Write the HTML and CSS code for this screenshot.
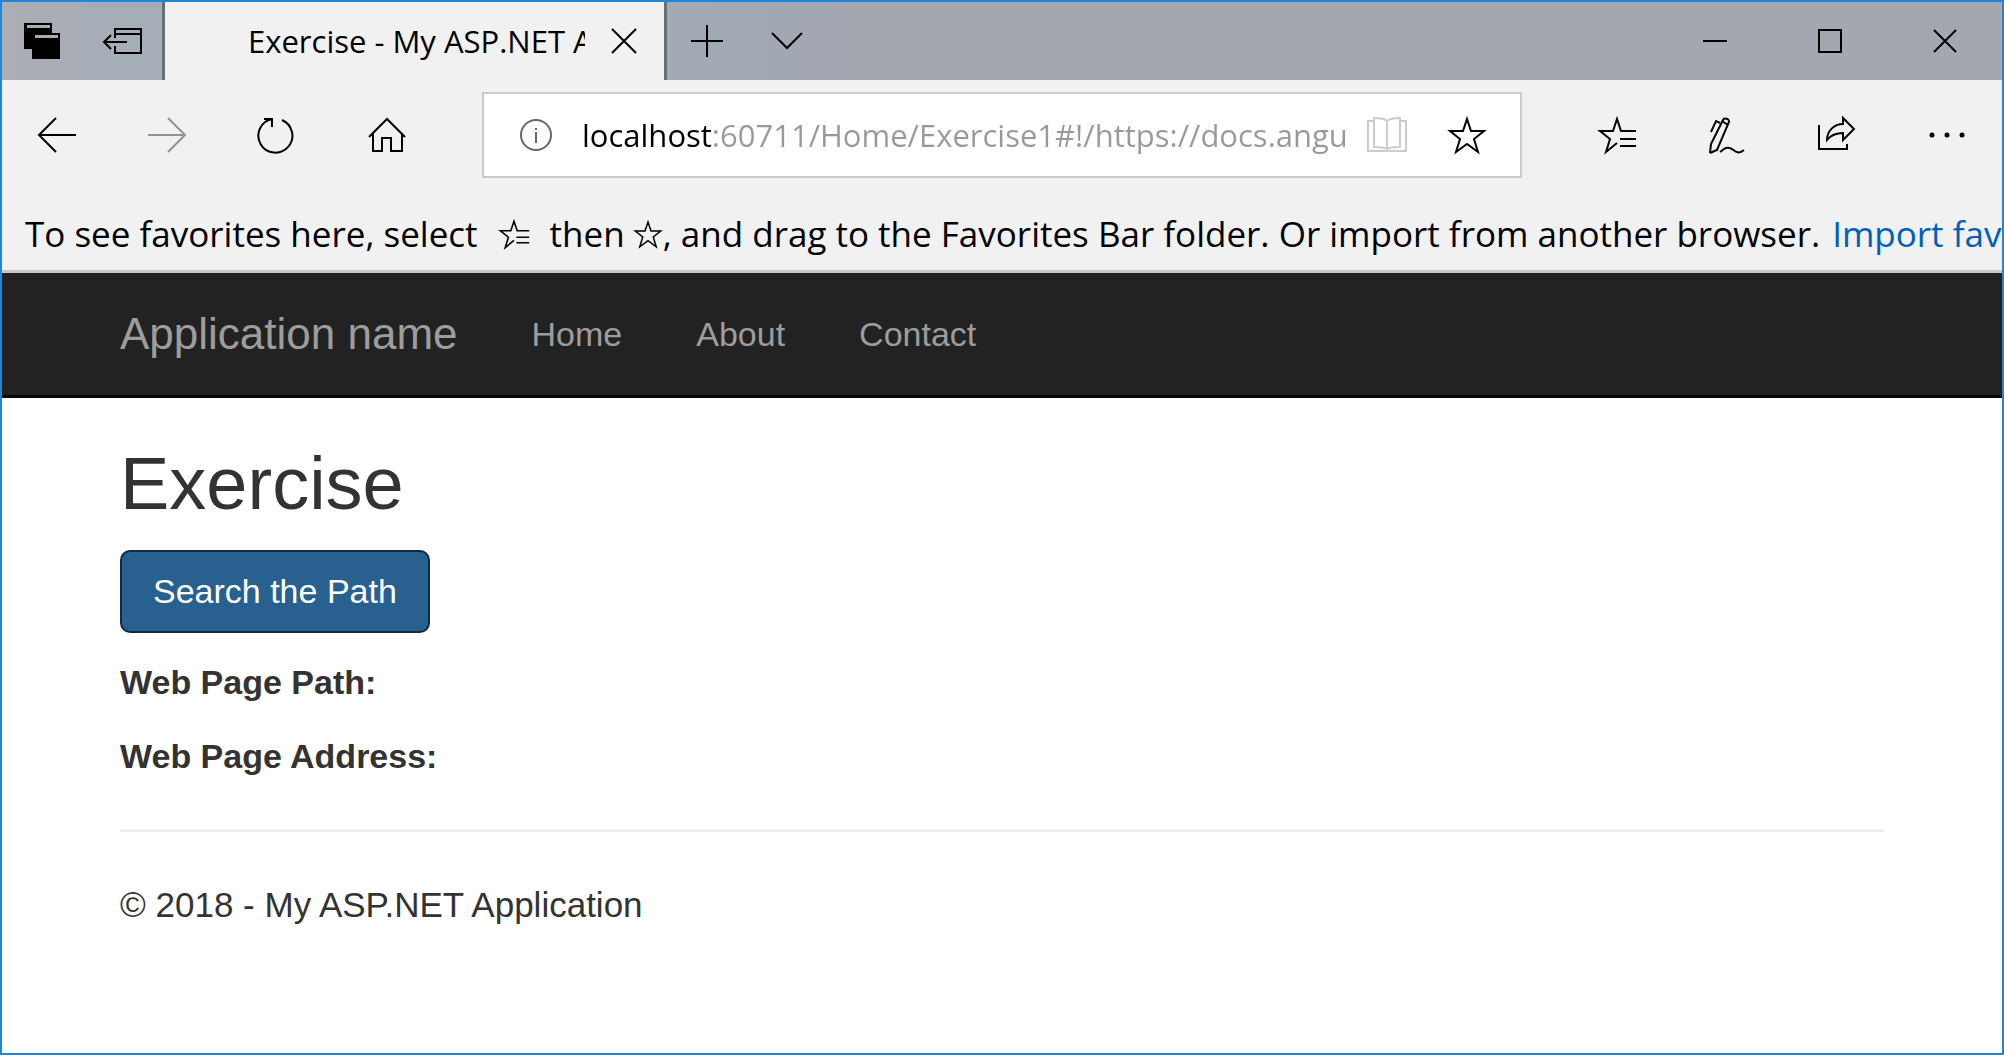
FILE: index.html
```
<!DOCTYPE html>
<html lang="en">
<head>
  <meta charset="UTF-8">
  <meta name="viewport" content="width=device-width, initial-scale=1.0">
  <title>Exercise - My ASP.NET Application</title>
  <link rel="stylesheet" href="styles.css">
</head>
<body>
  <div class="window">
    <div class="tabstrip">
      <button class="strip-btn" aria-label="Tabs you've set aside">
        <svg class="solid" width="40" height="40" viewBox="0 0 40 40"><path fill="#000" d="M2 2h28v10h8v26H10V28H2z"/><path fill="#a8acb5" d="M5 4h23v3H5zM13 14h23v3H13z"/></svg>
      </button>
      <button class="strip-btn" aria-label="Set these tabs aside">
        <svg width="42" height="40" viewBox="0 0 42 40"><path d="M14 17V8h26v24H14v-7M14 13h26M26 21H3M10 14l-7 7 7 7"/></svg>
      </button>
      <div class="tab">
        <span class="tab-title">Exercise - My ASP.NET Application</span>
        <button class="tab-close" aria-label="Close tab">
          <svg width="26" height="26" viewBox="0 0 26 26"><path d="M1 1l24 24M25 1L1 25"/></svg>
        </button>
      </div>
      <button class="strip-btn" aria-label="New tab">
        <svg width="34" height="34" viewBox="0 0 34 34"><path d="M17 1v32M1 17h32"/></svg>
      </button>
      <button class="strip-btn" aria-label="Show tab previews">
        <svg width="34" height="20" viewBox="0 0 34 20"><path d="M2 2l15 15L32 2"/></svg>
      </button>
      <div class="window-controls">
        <button aria-label="Minimize"><svg width="24" height="24" viewBox="0 0 24 24"><path d="M0 12h24"/></svg></button>
        <button aria-label="Maximize"><svg width="24" height="24" viewBox="0 0 24 24"><path d="M1 1h22v22H1z"/></svg></button>
        <button aria-label="Close"><svg width="24" height="24" viewBox="0 0 24 24"><path d="M1 1l22 22M23 1L1 23"/></svg></button>
      </div>
    </div>

    <div class="toolbar">
      <button aria-label="Back"><svg width="40" height="40" viewBox="0 0 40 40"><path d="M39 20H2M19 3L2 20l17 17"/></svg></button>
      <button class="disabled" aria-label="Forward" disabled><svg width="40" height="40" viewBox="0 0 40 40"><path d="M1 20h37M21 3l17 17-17 17"/></svg></button>
      <button aria-label="Refresh"><svg width="40" height="40" viewBox="0 0 40 40"><path d="M7 4h8v8M15 4a17 17 0 1 0 10 1"/></svg></button>
      <button aria-label="Home"><svg width="40" height="40" viewBox="0 0 40 40"><path d="M2 22L20 4l18 18M6 18v18h9V23h9v13h11V18"/></svg></button>
      <div class="address">
        <svg class="info" width="32" height="32" viewBox="0 0 32 32"><circle cx="16" cy="16" r="15"/><path d="M16 13v11M16 9v2"/></svg>
        <input type="text" aria-label="Address" value="localhost:60711/Home/Exercise1#!/https://docs.angu">
        <button aria-label="Reading view">
          <svg class="book" width="40" height="40" viewBox="0 0 40 40"><path d="M7 6H1v30h38V6h-6M20 6c-3-3-8-3-13-3v29c5 0 10 0 13 2 3-2 8-2 13-2V3c-5 0-10 0-13 3v27"/></svg>
        </button>
        <button aria-label="Add to favorites">
          <svg width="40" height="40" viewBox="0 0 40 40"><path d="M20 4l4 12h13l-10 8 4 13-11-8-11 8 4-13L3 16h13z"/></svg>
        </button>
      </div>
      <button aria-label="Hub"><svg width="40" height="40" viewBox="0 0 40 40"><path d="M39 16H24L20 4l-4 12H3l10 8-4 13 11-9M23 24h16M23 31h16"/></svg></button>
      <button aria-label="Add notes"><svg width="40" height="40" viewBox="0 0 40 40"><path d="M3 38l1-9L16 5c1-3 7-1 6 2L10 35l-7 3M15 6l6 4M13 8l-4-2-5 11M13 37c4-3 6-6 12-3 3 2 6 6 12 1"/></svg></button>
      <button aria-label="Share"><svg width="40" height="40" viewBox="0 0 40 40"><path d="M2 10v24h28v-5M26 3l11 11-11 11v-7c-7 0-12 2-16 7 0-9 7-16 16-16z"/></svg></button>
      <button aria-label="Settings and more"><svg class="solid" width="40" height="40" viewBox="0 0 40 40"><g fill="#000"><circle cx="5" cy="20" r="2.5"/><circle cx="20" cy="20" r="2.5"/><circle cx="35" cy="20" r="2.5"/></g></svg></button>
    </div>

    <div class="favorites">
      <span>To see favorites here, select</span>
      <svg class="hub" width="32" height="32" viewBox="0 0 40 40"><path d="M39 16H24L20 4l-4 12H3l10 8-4 13 11-9M23 24h16M23 31h16"/></svg>
      <span>then</span>
      <svg class="star" width="30" height="30" viewBox="0 0 40 40"><path d="M20 4l4 12h13l-10 8 4 13-11-8-11 8 4-13L3 16h13z"/></svg>
      <span>, and drag to the Favorites Bar folder. Or import from another browser.</span>
      <a href="#">Import favorites</a>
    </div>

    <nav class="navbar">
      <a class="brand" href="#">Application name</a>
      <a href="#">Home</a>
      <a href="#">About</a>
      <a href="#">Contact</a>
    </nav>

    <main class="body-content">
      <h2>Exercise</h2>
      <button class="btn">Search the Path</button>
      <p><strong>Web Page Path:</strong></p>
      <p><strong>Web Page Address:</strong></p>
      <hr>
      <footer>
        <p>© 2018 - My ASP.NET Application</p>
      </footer>
    </main>
  </div>
</body>
</html>
```
FILE: styles.css
```
* {
  box-sizing: border-box;
}

body {
  margin: 0;
  background: #fff;
  color: #333;
  font-family: "Liberation Sans", Arial, sans-serif;
  font-size: 34px;
  line-height: 50px;
}

.window {
  min-height: 100vh;
  border: 2px solid #1f86d8;
  overflow: hidden;
}

svg {
  display: block;
  flex: none;
  fill: none;
  stroke: #000;
  stroke-width: 2;
}

svg.solid {
  stroke: none;
}

button {
  padding: 0;
  border: 0;
  background: none;
  cursor: pointer;
}

.tabstrip button,
.toolbar button {
  display: flex;
  align-items: center;
  justify-content: center;
  flex: none;
}

/* tab strip */
.tabstrip {
  display: flex;
  height: 78px;
  background: linear-gradient(90deg, #acadb5 0, #a5adb7 120px, #a2aab6 680px, #a3a7b0 900px, #a3a7b0 100%);
}

.strip-btn {
  width: 80px;
}

.tab {
  display: flex;
  align-items: center;
  width: 505px;
  padding-left: 83px;
  background: #f1f1f1;
  border: solid #696d74;
  border-width: 0 3px;
}

.tab-title {
  width: 337px;
  overflow: hidden;
  white-space: nowrap;
  color: #000;
  font-family: "Open Sans", "Segoe UI", sans-serif;
  font-size: 31px;
}

.tabstrip .tab-close {
  margin-left: 26px;
}

.window-controls {
  display: flex;
  margin-left: auto;
}

.window-controls button {
  width: 115px;
}

/* toolbar */
.toolbar {
  display: flex;
  align-items: center;
  height: 110px;
  background: #f1f1f1;
}

.toolbar button {
  width: 110px;
  height: 80px;
}

.toolbar .disabled svg {
  stroke: #929292;
}

.address {
  display: flex;
  align-items: center;
  flex: 1;
  min-width: 0;
  height: 86px;
  margin: 0 40px;
  padding: 0 13px 0 36px;
  background: #fff;
  border: 2px solid #cacaca;
}

.address .info {
  stroke: #666;
}

.address input {
  flex: 1;
  min-width: 0;
  height: 60px;
  margin-left: 30px;
  padding: 0;
  border: 0;
  outline: 0;
  font-family: "Open Sans", "Segoe UI", sans-serif;
  font-size: 31px;
  /* host name dark, rest of the url grey */
  background: linear-gradient(90deg, #000 132px, #999 132px);
  -webkit-background-clip: text;
  background-clip: text;
  -webkit-text-fill-color: transparent;
}

.toolbar .address button {
  width: 80px;
}

.address .book {
  stroke: #ccc;
}

/* favorites bar */
.favorites {
  display: flex;
  align-items: center;
  height: 83px;
  padding: 8px 0 0 23px;
  background: #f1f1f1;
  border-bottom: 3px solid #c8c9c8;
  color: #000;
  font-family: "Open Sans", "Segoe UI", sans-serif;
  font-size: 35px;
  white-space: nowrap;
}

.favorites .hub {
  margin: 0 20px;
}

.favorites .star {
  margin-left: 8px;
}

.favorites a {
  margin-left: 12px;
  color: #005fbe;
  text-decoration: none;
}

/* page */
.navbar {
  display: flex;
  align-items: center;
  gap: 74px;
  height: 125px;
  padding: 0 118px;
  background: #222;
  border-bottom: 3px solid #080808;
}

.navbar a {
  color: #9d9d9d;
  text-decoration: none;
}

.navbar .brand {
  font-size: 44px;
}

.body-content {
  padding: 0 118px;
}

h2 {
  margin: 46px 0 26px;
  font-size: 74px;
  font-weight: 500;
  line-height: 80px;
}

.btn {
  display: block;
  height: 83px;
  padding: 0 31px;
  background: #286090;
  border: 2px solid #122b40;
  border-radius: 10px;
  color: #fff;
  font-family: inherit;
  font-size: 34px;
}

p {
  margin: 24px 0;
}

hr {
  margin: 48px 0;
  border: 0;
  border-top: 3px solid #eee;
}

footer {
  font-size: 35px;
}
```
